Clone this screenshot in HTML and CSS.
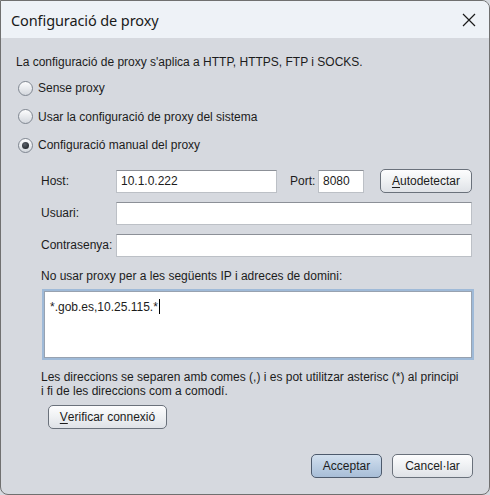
FILE: index.html
```html
<!DOCTYPE html>
<html lang="ca">
<head>
<meta charset="utf-8">
<title>Configuració de proxy</title>
<link rel="stylesheet" href="styles.css">
</head>
<body>
<div class="window">
  <div class="titlebar">
    <span class="title">Configuració de proxy</span>
    <svg class="close" width="14" height="14" viewBox="0 0 14 14"><path d="M1 1 L13 13 M13 1 L1 13" stroke="#1b1b1b" stroke-width="1.2" fill="none"/></svg>
  </div>
  <div class="content">
    <div class="intro">La configuració de proxy s'aplica a HTTP, HTTPS, FTP i SOCKS.</div>
    <div class="radios">
      <div class="radio-row"><span class="radio"></span><span>Sense proxy</span></div>
      <div class="radio-row"><span class="radio"></span><span>Usar la configuració de proxy del sistema</span></div>
      <div class="radio-row"><span class="radio checked"></span><span>Configuració manual del proxy</span></div>
    </div>
    <div class="manual">
      <div class="form-row">
        <span class="label">Host:</span>
        <div class="field host">10.1.0.222</div>
        <span class="port-label">Port:</span>
        <div class="field port">8080</div>
        <button class="btn auto"><u>A</u>utodetectar</button>
      </div>
      <div class="form-row">
        <span class="label">Usuari:</span>
        <div class="field wide"></div>
      </div>
      <div class="form-row">
        <span class="label">Contrasenya:</span>
        <div class="field wide"></div>
      </div>
      <div class="noproxy-label">No usar proxy per a les següents IP i adreces de domini:</div>
      <div class="textarea">*.gob.es,10.25.115.*<span class="caret"></span></div>
      <div class="help">Les direccions se separen amb comes (,) i es pot utilitzar asterisc (*) al principi<br>i fi de les direccions com a comodí.</div>
      <button class="btn verify"><u>V</u>erificar connexió</button>
    </div>
    <div class="footer">
      <button class="btn default accept">Acceptar</button>
      <button class="btn cancel">Cancel·lar</button>
    </div>
  </div>
</div>
</body>
</html>
```
FILE: styles.css
```css
* { box-sizing: border-box; }
html, body { margin: 0; padding: 0; background: #d6d9df; }
body {
  font-family: "Liberation Sans", Arial, sans-serif;
  font-size: 12px;
  color: #1c1c1c;
}
.window {
  width: 490px;
  height: 495px;
  border: 1px solid #707070;
  border-radius: 0 8px 8px 8px;
  overflow: hidden;
  background: #d6d9df;
  display: flex;
  flex-direction: column;
}
.titlebar {
  height: 37px;
  background: #eef2f7;
  display: flex;
  align-items: center;
  justify-content: space-between;
  padding: 0 13px 0 10px;
  flex-shrink: 0;
}
.title {
  font-family: "Noto Sans", "Open Sans", sans-serif;
  font-size: 14.5px;
  color: #1a1a1a;
  letter-spacing: -0.1px;
}
.close { display: block; margin-top: 1px; }
.content {
  flex: 1;
  padding: 16px 16px 0 15px;
  display: flex;
  flex-direction: column;
}
.intro { line-height: 16px; height: 16px; }
.radios { margin-top: 4px; display: flex; flex-direction: column; }
.radio-row {
  height: 28.5px;
  display: flex;
  align-items: center;
  gap: 5px;
  padding-left: 2px;
}
.radio {
  width: 15px;
  height: 15px;
  border-radius: 50%;
  border: 1px solid #7f8690;
  background: linear-gradient(#fdfdfe, #d3d7dd);
  display: flex;
  align-items: center;
  justify-content: center;
  flex-shrink: 0;
}
.radio.checked::after {
  content: "";
  width: 7px;
  height: 7px;
  border-radius: 50%;
  background: radial-gradient(circle at 40% 35%, #5b616a, #15181c);
}
.manual {
  padding-left: 25px;
  margin-top: 10px;
  display: flex;
  flex-direction: column;
}
.form-row {
  display: flex;
  align-items: center;
  height: 23px;
  margin-bottom: 9px;
}
.label { width: 75px; flex-shrink: 0; }
.field {
  height: 23px;
  background: #fff;
  border: 1px solid #bcc0c6;
  border-top-color: #8c9097;
  padding: 0 4px;
  line-height: 21px;
}
.host { width: 161px; }
.port-label { margin-left: 13px; width: 28px; }
.port { width: 46px; }
.wide { width: 356px; }
.btn {
  font-family: "Liberation Sans", Arial, sans-serif;
  font-size: 12px;
  color: #1c1c1c;
  height: 24px;
  border: 1px solid #6a717b;
  border-radius: 5px;
  background: linear-gradient(#fdfdfe 0%, #f0f2f4 45%, #dfe2e7 100%);
  padding: 0;
  display: flex;
  align-items: center;
  justify-content: center;
}
.btn u { text-decoration-thickness: 1px; text-underline-offset: 2px; }
.auto { width: 92px; margin-left: 16px; }
.noproxy-label { line-height: 16px; margin-top: 2px; }
.textarea {
  margin-top: 5px;
  margin-left: 1px;
  width: 432px;
  height: 71px;
  background: #fff;
  border: 2px solid #9fbad8;
  box-shadow: inset 0 0 0 1px #98a2b0;
  padding: 8px 6px;
  line-height: 16px;
}
.caret {
  display: inline-block;
  width: 1px;
  height: 15px;
  background: #000;
  vertical-align: -3px;
  margin-left: 1px;
}
.help { margin-top: 10px; line-height: 14px; white-space: nowrap; }
.verify { width: 119px; margin-top: 7px; margin-left: 7px; }
.footer {
  margin-top: 25px;
  display: flex;
  justify-content: flex-end;
  gap: 10px;
}
.accept { width: 71px; }
.cancel { width: 81px; }
.btn.default {
  border-color: #4d5a6c;
  background: linear-gradient(#d3e0ee 0%, #bccee3 50%, #a8bed7 100%);
}
```
